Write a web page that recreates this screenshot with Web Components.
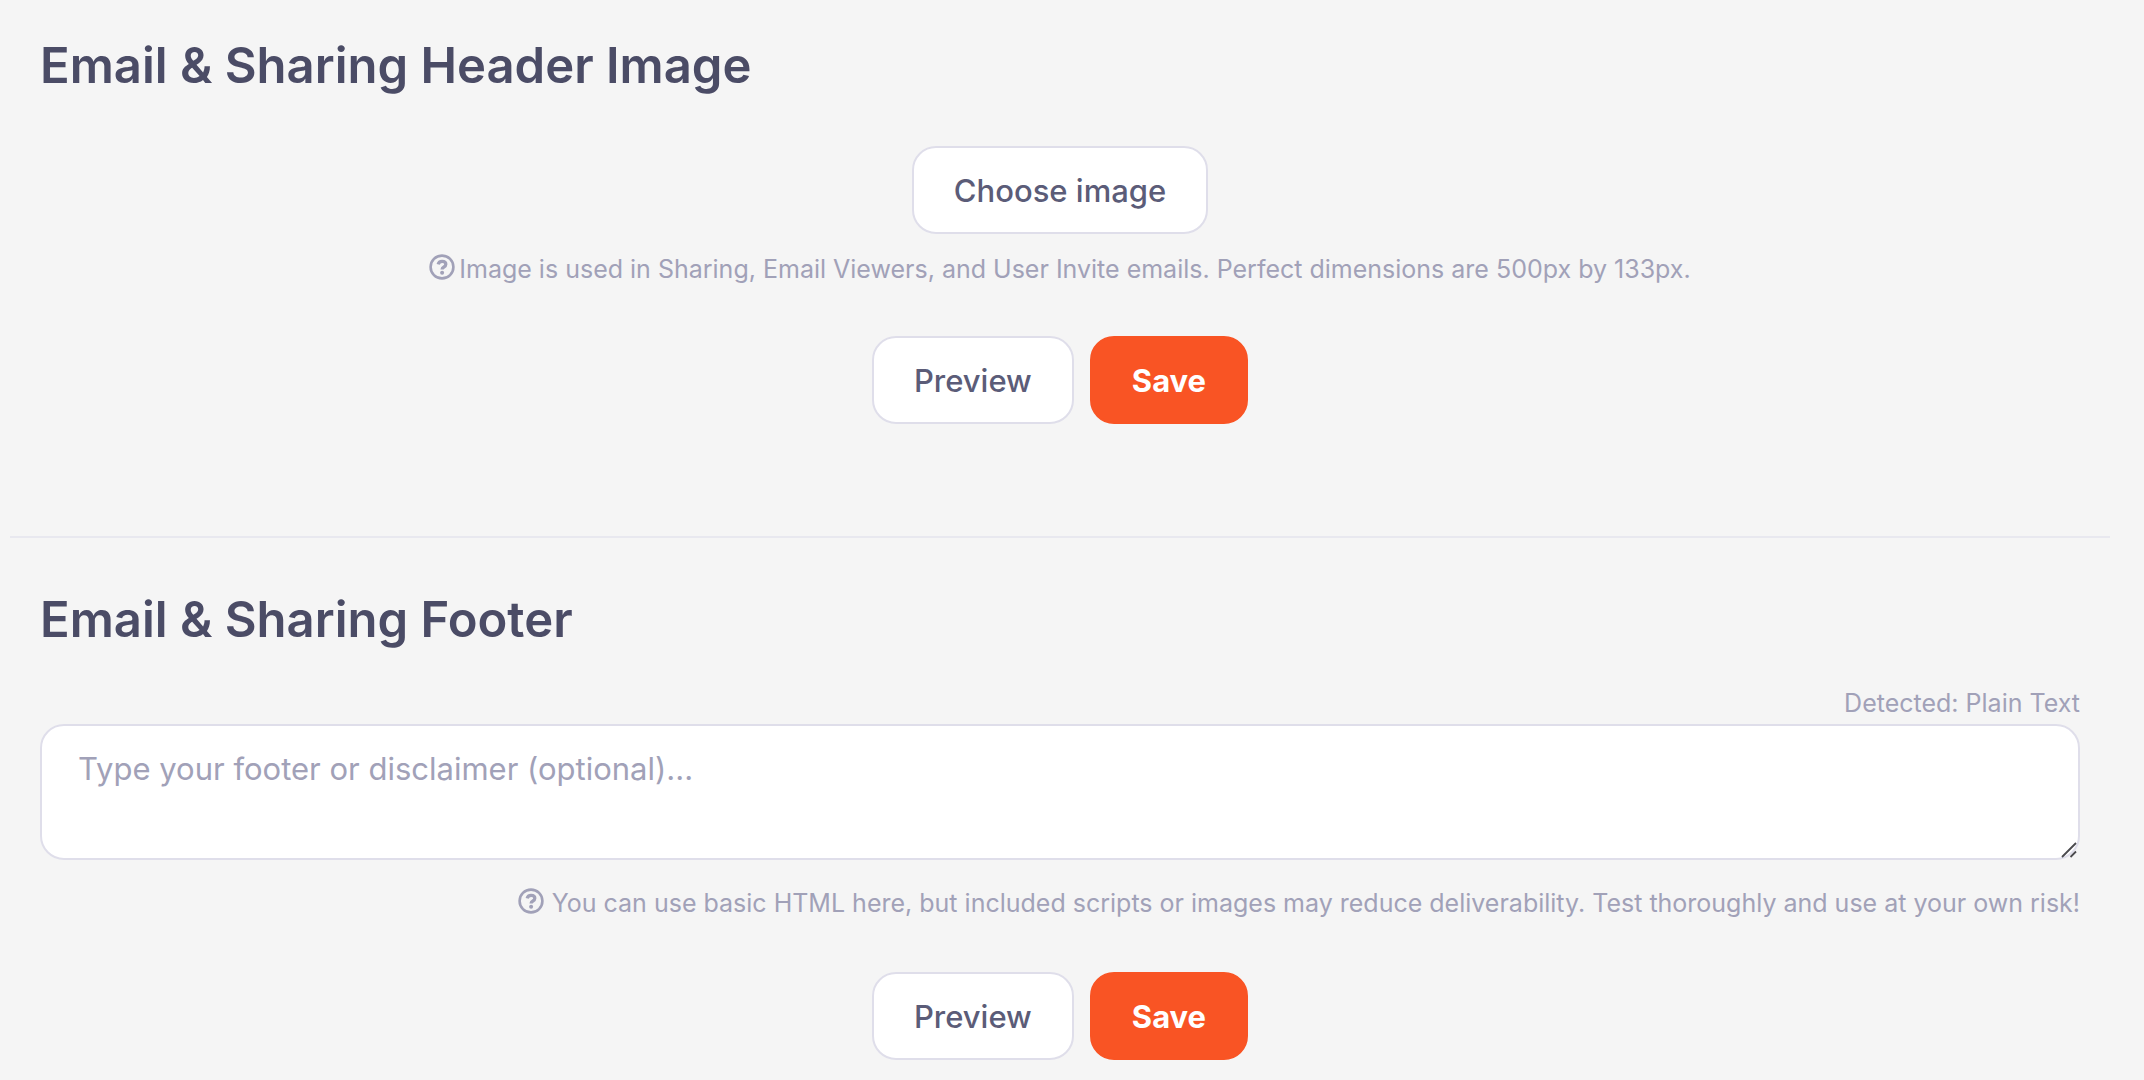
<!DOCTYPE html>
<html lang="en">
<head>
<meta charset="utf-8">
<title>Email &amp; Sharing Settings</title>
<style>
html, body { margin: 0; }
body {
  background: #f5f5f5;
  color: #4b4c66;
  font-family: Inter, "Liberation Sans", sans-serif;
}
</style>
</head>
<body>
<settings-page>
  <settings-section heading="Email &amp; Sharing Header Image">
    <action-row><ui-button>Choose image</ui-button></action-row>
    <help-note>Image is used in Sharing, Email Viewers, and User Invite emails. Perfect dimensions are 500px by 133px.</help-note>
    <action-row>
      <ui-button>Preview</ui-button>
      <ui-button variant="primary">Save</ui-button>
    </action-row>
  </settings-section>
  <settings-section heading="Email &amp; Sharing Footer">
    <footer-field status="Detected: Plain Text" placeholder="Type your footer or disclaimer (optional)..."></footer-field>
    <help-note align="end">You can use basic HTML here, but included scripts or images may reduce deliverability. Test thoroughly and use at your own risk!</help-note>
    <action-row>
      <ui-button>Preview</ui-button>
      <ui-button variant="primary">Save</ui-button>
    </action-row>
  </settings-section>
</settings-page>
<script>
const mount = (el, html) => { el.attachShadow({ mode: 'open' }).innerHTML = html; };

customElements.define('settings-page', class extends HTMLElement {
  constructor() {
    super();
    mount(this, `
      <style>
        :host { display: block; padding: 0 34px 20px 10px; }
        ::slotted(:not(:first-child)) { border-top: 2px solid #e8e8ef; --section-top: 52px; }
      </style>
      <slot></slot>`);
  }
});

customElements.define('settings-section', class extends HTMLElement {
  constructor() {
    super();
    mount(this, `
      <style>
        :host { display: block; padding: var(--section-top, 36px) 30px 0; }
        :host(:first-child) { padding-bottom: 112px; }
        h2 { margin: 0; font-size: 49px; line-height: 60px; font-weight: 600; color: #4b4c66; }
        ::slotted(action-row:first-child) { margin-top: 50px; }
        ::slotted(footer-field) { margin-top: 36px; }
        ::slotted(help-note) { margin-top: 15px; margin-bottom: 47px; }
        ::slotted(help-note[align="end"]) { margin-top: 23px; margin-bottom: 49px; }
      </style>
      <h2></h2>
      <slot></slot>`);
    this.shadowRoot.querySelector('h2').textContent = this.getAttribute('heading');
  }
});

customElements.define('action-row', class extends HTMLElement {
  constructor() {
    super();
    mount(this, `
      <style>:host { display: flex; justify-content: center; gap: 16px; }</style>
      <slot></slot>`);
  }
});

customElements.define('ui-button', class extends HTMLElement {
  constructor() {
    super();
    mount(this, `
      <style>
        :host { display: block; }
        button {
          display: block; box-sizing: border-box; height: 88px; margin: 0; padding: 2px 40px 0;
          border: 2px solid #dfdeea; border-radius: 24px; background: #fff; color: #5b5c78;
          font: 500 31px/40px Inter, "Liberation Sans", sans-serif; white-space: nowrap; cursor: pointer;
        }
        :host([variant="primary"]) button { background: #f95424; border-color: #f95424; color: #fff; font-weight: 700; }
      </style>
      <button type="button"><slot></slot></button>`);
  }
});

customElements.define('help-note', class extends HTMLElement {
  constructor() {
    super();
    mount(this, `
      <style>
        :host { display: flex; justify-content: center; align-items: center; gap: 4px; font-size: 25px; line-height: 40px; color: #a1a1b8; }
        :host([align="end"]) { justify-content: flex-end; gap: 8px; }
        svg { display: block; flex: none; width: 26px; height: 26px; margin-bottom: 4px; }
      </style>
      <svg viewBox="0 0 26 26" fill="none" stroke="currentColor" aria-hidden="true">
        <circle cx="13" cy="13" r="11.4" stroke-width="2.6"/>
        <path d="M9.2 10.4C9.6 8.5 11 7.4 13.1 7.4c2.2 0 3.7 1.1 3.7 2.9 0 1.2-.7 2-1.9 2.7-1.2.7-1.8 1.2-1.8 2.5" stroke-width="3.3"/>
        <circle cx="13.1" cy="18.8" r="2" fill="currentColor" stroke="none"/>
      </svg>
      <span><slot></slot></span>`);
  }
});

customElements.define('footer-field', class extends HTMLElement {
  constructor() {
    super();
    mount(this, `
      <style>
        :host { display: block; }
        label { display: block; margin-bottom: 4px; font-size: 25px; line-height: 34px; text-align: right; color: #a1a1b8; }
        .box { position: relative; }
        textarea {
          display: block; box-sizing: border-box; width: 100%; height: 136px; margin: 0; padding: 23px 36px;
          border: 2px solid #dfdeea; border-radius: 24px; background: #fff; color: #4b4c66; resize: none; overflow: hidden;
          font: 400 31px/40px Inter, "Liberation Sans", sans-serif;
        }
        textarea::placeholder { color: #a1a1b8; opacity: 1; }
        svg { position: absolute; right: 3px; bottom: 2px; width: 16px; height: 16px; pointer-events: none; }
      </style>
      <label for="footer"></label>
      <div class="box">
        <textarea id="footer"></textarea>
        <svg viewBox="0 0 16 16" stroke="#4a4a4e" stroke-width="1.8" aria-hidden="true"><path d="M1 15 15 1M9.5 15l5.5-5.5"/></svg>
      </div>`);
    this.shadowRoot.querySelector('label').textContent = this.getAttribute('status');
    this.shadowRoot.querySelector('textarea').placeholder = this.getAttribute('placeholder');
  }
});
</script>
</body>
</html>
